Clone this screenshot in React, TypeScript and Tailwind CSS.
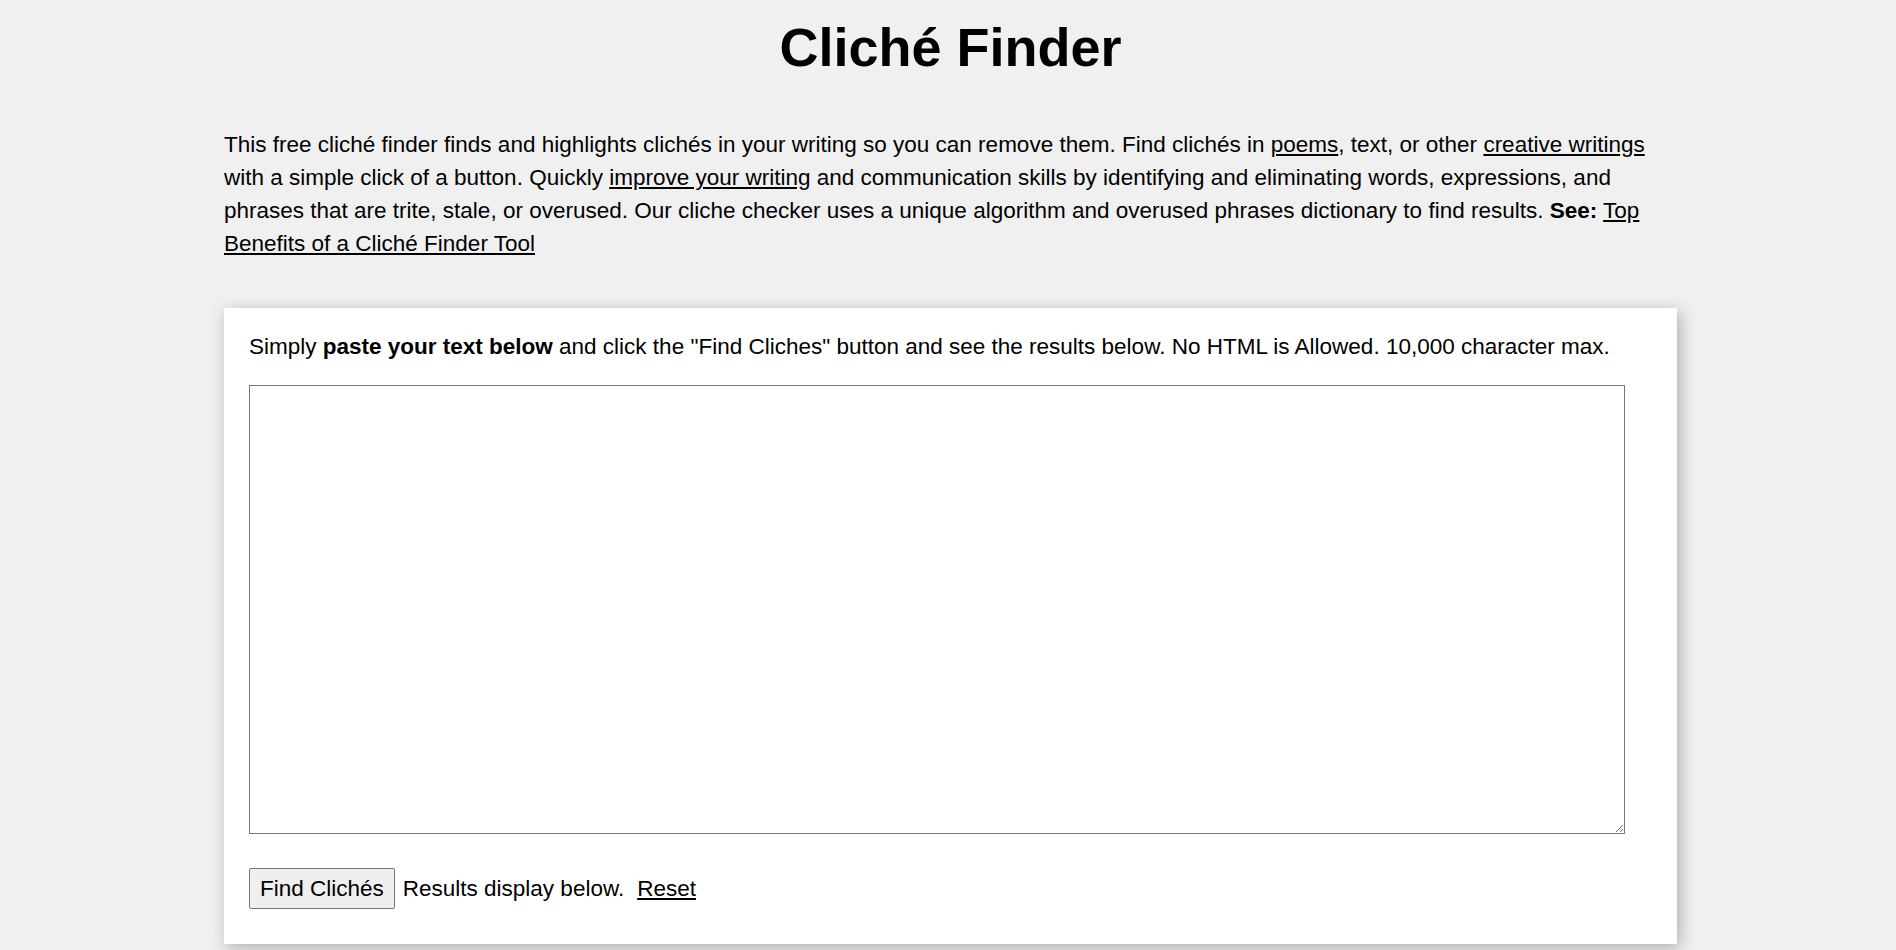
export default function App() {
  return (
    <div
      className="min-h-[950px] w-full bg-[#f0f0f0] text-black"
      style={{ fontFamily: '"Liberation Sans", Arial, sans-serif' }}
    >
      <div className="ml-[224px] w-[1453px] pt-[16px]">
        <h1 className="text-center text-[54px] font-bold leading-[62px]">Cliché Finder</h1>
        <p className="mt-[50px] text-[22.5px] leading-[33px] pr-[20px]">
          This free cliché finder finds and highlights clichés in your writing so you can remove them. Find clichés in{" "}
          <a href="#" className="underline">poems</a>, text, or other{" "}
          <a href="#" className="underline">creative writings</a> with a simple click of a button. Quickly{" "}
          <a href="#" className="underline">improve your writing</a> and communication skills by identifying and eliminating words, expressions, and phrases that are trite, stale, or overused. Our cliche checker uses a unique algorithm and overused phrases dictionary to find results.{" "}
          <b>See:</b> <a href="#" className="underline">Top Benefits of a Cliché Finder Tool</a>
        </p>
        <div className="mt-[48px] bg-white pl-[25px] pr-[24px] pt-[22px] pb-[35px] shadow-[3px_4px_16px_rgba(0,0,0,0.28)]">
          <p className="text-[22.5px] leading-[33px]">
            Simply <b>paste your text below</b> and click the "Find Cliches" button and see the results below. No HTML is Allowed. 10,000 character max.
          </p>
          <textarea className="mt-[22px] block h-[449px] w-[98%] resize border border-[#767676] bg-white p-[2px] text-[16px]" />
          <div className="mt-[34px] flex items-center text-[22.5px] leading-[33px]">
            <button className="h-[41px] rounded-[2px] border border-[#767676] bg-[#efefef] px-[10px] text-[22.5px] leading-[26px]">
              Find Clichés
            </button>
            <span className="ml-[8px]">Results display below.</span>
            <a href="#" className="ml-[13px] underline">Reset</a>
          </div>
        </div>
      </div>
    </div>
  );
}
